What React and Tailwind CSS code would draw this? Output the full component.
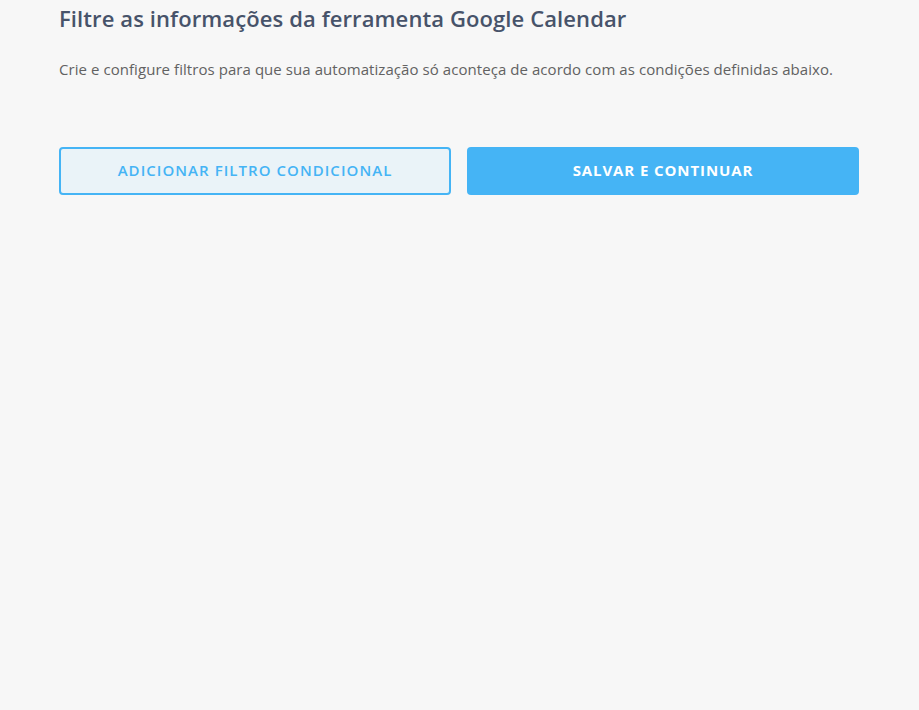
export default function App() {
  return (
    <div className="min-h-[710px] w-full bg-[#f7f7f7]" style={{ fontFamily: '"Open Sans", "Lato", sans-serif' }}>
      <div className="w-[800px] pl-[59px] box-content">
        <h1 className="pt-[3px] text-[22px] leading-[30px] font-semibold tracking-[0.1px] text-[#47536a]">
          Filtre as informações da ferramenta Google Calendar
        </h1>
        <p className="mt-[26px] text-[15px] leading-[20px] tracking-[0.06px] text-[#626262]">
          Crie e configure filtros para que sua automatização só aconteça de acordo com as condições definidas abaixo.
        </p>
        <div className="mt-[68px] grid grid-cols-2 gap-[16px]">
          <button className="h-[48px] rounded-[4px] border-2 border-[#45b4f5] bg-[#eaf3f8] pb-[2px] text-[15px] font-semibold tracking-[0.07em] text-[#45b4f5]">
            ADICIONAR FILTRO CONDICIONAL
          </button>
          <button className="h-[48px] rounded-[4px] bg-[#45b4f5] pb-[2px] text-[15px] font-bold tracking-[0.06em] text-white">
            SALVAR E CONTINUAR
          </button>
        </div>
      </div>
    </div>
  );
}
